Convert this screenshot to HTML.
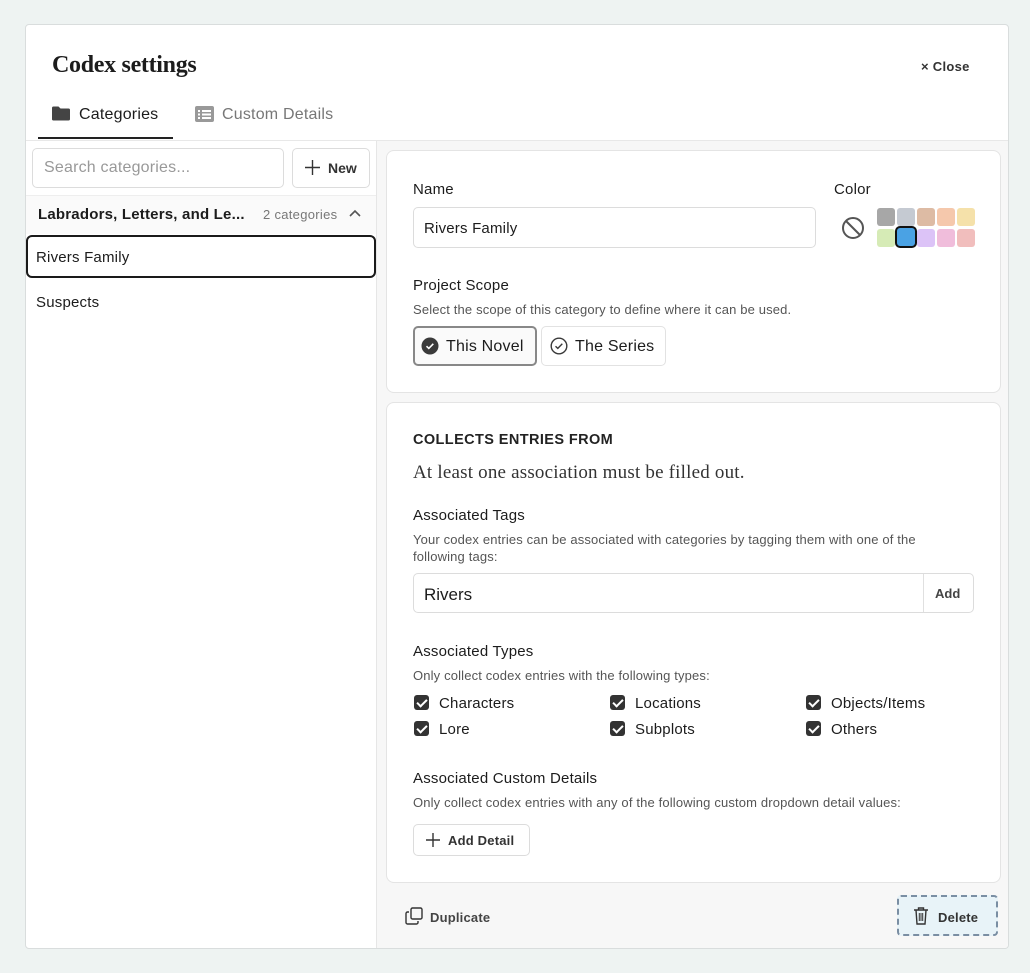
<!DOCTYPE html>
<html><head><style>
*{box-sizing:border-box;margin:0;padding:0}
body{width:1030px;height:973px;background:#eef3f2;font-family:"Liberation Sans",sans-serif;color:#1c1c1c;position:relative;overflow:hidden}
.a{position:absolute}
.modal{left:25px;top:24px;width:984px;height:925px;background:#fff;border:1px solid #d9dddd;border-radius:4px}
.t{position:absolute;white-space:nowrap;margin-top:1px}
.box{position:absolute;border:1px solid #dcdcdc;border-radius:5px;background:#fff}
.card{position:absolute;background:#fff;border:1px solid #e4e4e4;border-radius:8px}
.lbl{font-size:15px;color:#1c1c1c;letter-spacing:0.2px}
.sm{font-size:13px;color:#555;letter-spacing:0.15px}
.cb{position:absolute;width:15px;height:15px;background:#333;border-radius:3px}
.cb:after{content:"";position:absolute;left:5px;top:2px;width:4px;height:8px;border:solid #fff;border-width:0 2px 2px 0;transform:rotate(45deg)}
.sw{position:absolute;width:18px;height:18px;border-radius:3px}
</style></head><body>
<div class="a modal"></div>
<div class="t" style="left:52px;top:51px;font-family:'Liberation Serif',serif;font-weight:bold;font-size:24px;letter-spacing:-0.3px">Codex settings</div>
<div class="t" style="left:921px;top:58px;font-size:13px;color:#333;font-weight:bold;letter-spacing:0.3px">× Close</div>
<svg class="a" style="left:52px;top:106px" width="18" height="15" viewBox="0 0 18 15"><path d="M0 2a1.5 1.5 0 0 1 1.5-1.5h5l2 2h8a1.5 1.5 0 0 1 1.5 1.5v9a1.5 1.5 0 0 1-1.5 1.5h-15A1.5 1.5 0 0 1 0 12.5z" fill="#444"/></svg>
<div class="t" style="left:79px;top:105px;font-size:16px;letter-spacing:0.2px">Categories</div>
<div class="a" style="left:38px;top:137px;width:135px;height:2px;background:#222"></div>
<svg class="a" style="left:195px;top:106px" width="19" height="16" viewBox="0 0 19 16"><rect width="19" height="16" rx="2" fill="#999"/><rect x="3" y="4" width="2" height="2" fill="#fff"/><rect x="7" y="4" width="9" height="2" fill="#fff"/><rect x="3" y="7.5" width="2" height="2" fill="#fff"/><rect x="7" y="7.5" width="9" height="2" fill="#fff"/><rect x="3" y="11" width="2" height="2" fill="#fff"/><rect x="7" y="11" width="9" height="2" fill="#fff"/></svg>
<div class="t" style="left:222px;top:105px;font-size:16px;color:#777;letter-spacing:0.2px">Custom Details</div>
<div class="a" style="left:26px;top:140px;width:982px;height:1px;background:#e8e8e8"></div>
<div class="a" style="left:376px;top:141px;width:1px;height:807px;background:#e6e6e6"></div>
<div class="box" style="left:32px;top:148px;width:252px;height:40px"></div>
<div class="t" style="left:44px;top:158px;font-size:16px;color:#999;letter-spacing:0.2px">Search categories...</div>
<div class="box" style="left:292px;top:148px;width:78px;height:40px"></div>
<svg class="a" style="left:305px;top:160px" width="15" height="15"><path d="M7.5 0v15M0 7.5h15" stroke="#333" stroke-width="1.4"/></svg>
<div class="t" style="left:328px;top:159px;font-size:14px;font-weight:bold;color:#333">New</div>
<div class="a" style="left:26px;top:195px;width:350px;height:39px;background:#fafafa;border-top:1px solid #eee"></div>
<div class="t" style="left:38px;top:205px;font-size:15px;font-weight:bold;letter-spacing:0.2px">Labradors, Letters, and Le...</div>
<div class="t" style="left:263px;top:206px;font-size:13px;color:#777;letter-spacing:0.3px">2 categories</div>
<svg class="a" style="left:349px;top:209px" width="12" height="8"><path d="M1 7l5-5 5 5" fill="none" stroke="#555" stroke-width="1.6"/></svg>
<div class="a" style="left:26px;top:235px;width:350px;height:43px;border:2px solid #1a1a1a;border-radius:6px;background:#fff"></div>
<div class="t" style="left:36px;top:248px;font-size:15px;letter-spacing:0.2px">Rivers Family</div>
<div class="t" style="left:36px;top:293px;font-size:15px;letter-spacing:0.2px">Suspects</div>
<div class="a" style="left:377px;top:141px;width:631px;height:807px;background:#f7f7f7;border-radius:0 0 4px 0"></div>
<div class="card" style="left:386px;top:150px;width:615px;height:243px"></div>
<div class="t lbl" style="left:413px;top:180px">Name</div>
<div class="box" style="left:413px;top:207px;width:403px;height:41px"></div>
<div class="t" style="left:424px;top:219px;font-size:15px;letter-spacing:0.2px">Rivers Family</div>
<div class="t lbl" style="left:834px;top:180px">Color</div>
<svg class="a" style="left:841px;top:216px" width="24" height="24" viewBox="0 0 24 24"><circle cx="12" cy="12" r="10" fill="none" stroke="#555" stroke-width="2"/><path d="M5 5l14 14" stroke="#555" stroke-width="2"/></svg>
<div class="sw" style="left:877px;top:208px;background:#a7a7a7"></div>
<div class="sw" style="left:897px;top:208px;background:#c5cad2"></div>
<div class="sw" style="left:917px;top:208px;background:#ddbba4"></div>
<div class="sw" style="left:937px;top:208px;background:#f5c8ac"></div>
<div class="sw" style="left:957px;top:208px;background:#f5e1aa"></div>
<div class="sw" style="left:877px;top:229px;background:#d6ebb6"></div>
<div class="sw" style="left:895px;top:226px;width:22px;height:22px;background:#4aa2e4;border:2px solid #111;border-radius:5px"></div>
<div class="sw" style="left:917px;top:229px;background:#dcc3f7"></div>
<div class="sw" style="left:937px;top:229px;background:#f0bddb"></div>
<div class="sw" style="left:957px;top:229px;background:#f1bebd"></div>
<div class="t lbl" style="left:413px;top:276px">Project Scope</div>
<div class="t sm" style="left:413px;top:301px">Select the scope of this category to define where it can be used.</div>
<div class="a" style="left:413px;top:326px;width:124px;height:40px;border:2px solid #888;border-radius:5px;background:#fafafa"></div>
<svg class="a" style="left:421px;top:337px" width="18" height="18" viewBox="0 0 18 18"><circle cx="9" cy="9" r="8.5" fill="#3a3a3a"/><path d="M5.5 9.2l2.3 2.2 4.5-4.6" fill="none" stroke="#fff" stroke-width="1.6"/></svg>
<div class="t" style="left:446px;top:337px;font-size:16px;letter-spacing:0.2px">This Novel</div>
<div class="box" style="left:541px;top:326px;width:125px;height:40px;border-color:#e2e2e2"></div>
<svg class="a" style="left:550px;top:337px" width="18" height="18" viewBox="0 0 18 18"><circle cx="9" cy="9" r="7.8" fill="none" stroke="#3a3a3a" stroke-width="1.4"/><path d="M5.5 9.2l2.3 2.2 4.5-4.6" fill="none" stroke="#3a3a3a" stroke-width="1.4"/></svg>
<div class="t" style="left:575px;top:337px;font-size:16px;letter-spacing:0.2px">The Series</div>
<div class="card" style="left:386px;top:402px;width:615px;height:481px"></div>
<div class="t" style="left:413px;top:431px;font-size:14.5px;font-weight:bold;letter-spacing:0.4px;color:#222">COLLECTS ENTRIES FROM</div>
<div class="t" style="left:413px;top:461px;font-family:'Liberation Serif',serif;font-size:19px;color:#333;letter-spacing:0.2px">At least one association must be filled out.</div>
<div class="t lbl" style="left:413px;top:506px">Associated Tags</div>
<div class="t sm" style="left:413px;top:530px;line-height:17px">Your codex entries can be associated with categories by tagging them with one of the<br>following tags:</div>
<div class="box" style="left:413px;top:573px;width:561px;height:40px"></div>
<div class="a" style="left:923px;top:574px;width:1px;height:38px;background:#e0e0e0"></div>
<div class="t" style="left:424px;top:584px;font-size:17px">Rivers</div>
<div class="t" style="left:935px;top:585px;font-size:13px;font-weight:bold;color:#444">Add</div>
<div class="t lbl" style="left:413px;top:642px">Associated Types</div>
<div class="t sm" style="left:413px;top:667px">Only collect codex entries with the following types:</div>
<div class="cb" style="left:414px;top:695px"></div><div class="t lbl" style="left:439px;top:694px">Characters</div>
<div class="cb" style="left:610px;top:695px"></div><div class="t lbl" style="left:635px;top:694px">Locations</div>
<div class="cb" style="left:806px;top:695px"></div><div class="t lbl" style="left:831px;top:694px">Objects/Items</div>
<div class="cb" style="left:414px;top:721px"></div><div class="t lbl" style="left:439px;top:720px">Lore</div>
<div class="cb" style="left:610px;top:721px"></div><div class="t lbl" style="left:635px;top:720px">Subplots</div>
<div class="cb" style="left:806px;top:721px"></div><div class="t lbl" style="left:831px;top:720px">Others</div>
<div class="t lbl" style="left:413px;top:769px">Associated Custom Details</div>
<div class="t sm" style="left:413px;top:794px">Only collect codex entries with any of the following custom dropdown detail values:</div>
<div class="box" style="left:413px;top:824px;width:117px;height:32px"></div>
<svg class="a" style="left:426px;top:833px" width="14" height="14"><path d="M7 0v14M0 7h14" stroke="#333" stroke-width="1.4"/></svg>
<div class="t" style="left:448px;top:832px;font-size:13px;font-weight:bold;color:#333;letter-spacing:0.2px">Add Detail</div>
<svg class="a" style="left:405px;top:907px" width="18" height="18" viewBox="0 0 18 18"><rect x="6" y="1" width="11" height="11" rx="1.5" fill="none" stroke="#333" stroke-width="1.4"/><path d="M4 5H2.5A1.5 1.5 0 0 0 1 6.5v9A1.5 1.5 0 0 0 2.5 17h9a1.5 1.5 0 0 0 1.5-1.5V14" fill="none" stroke="#333" stroke-width="1.4"/></svg>
<div class="t" style="left:430px;top:909px;font-size:13px;font-weight:bold;color:#444;letter-spacing:0.2px">Duplicate</div>
<div class="a" style="left:897px;top:895px;width:101px;height:41px;border:2px dashed #7a8ea3;border-radius:4px;background:#e8f3f8"></div>
<svg class="a" style="left:913px;top:906px" width="16" height="19" viewBox="0 0 16 19"><path d="M1 4h14M5.5 4V2h5v2M3 4l1 14h8l1-14" fill="none" stroke="#333" stroke-width="1.4"/><path d="M6.3 7v8M8 7v8M9.7 7v8" stroke="#333" stroke-width="1"/></svg>
<div class="t" style="left:938px;top:909px;font-size:13px;font-weight:bold;color:#333;letter-spacing:0.2px">Delete</div>
</body></html>
